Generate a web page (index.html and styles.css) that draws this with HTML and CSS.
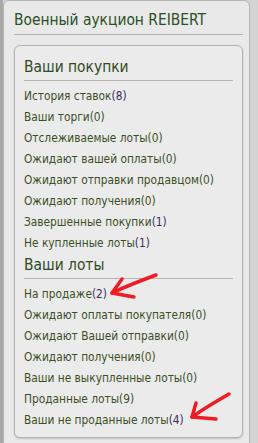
FILE: index.html
```html
<!DOCTYPE html>
<html lang="ru">
<head>
    <meta charset="UTF-8">
    <meta name="viewport" content="width=device-width, initial-scale=1.0">
    <title>Военный аукцион REIBERT</title>
    <link rel="stylesheet" href="styles.css">
</head>
<body>
    <div class="page">
        <div class="panel">
            <h2 class="panel-title">Военный аукцион REIBERT</h2>
            <div class="box">
                <h3>Ваши покупки</h3>
                <ul class="menu">
                    <li><a href="#">История ставок<span class="num">(8)</span></a></li>
                    <li><a href="#">Ваши торги(0)</a></li>
                    <li><a href="#">Отслеживаемые лоты(0)</a></li>
                    <li><a href="#">Ожидают вашей оплаты(0)</a></li>
                    <li><a href="#">Ожидают отправки продавцом(0)</a></li>
                    <li><a href="#">Ожидают получения(0)</a></li>
                    <li><a href="#">Завершенные покупки<span class="num">(1)</span></a></li>
                    <li><a href="#">Не купленные лоты<span class="num">(1)</span></a></li>
                </ul>
                <h3>Ваши лоты</h3>
                <ul class="menu">
                    <li><a href="#">На продаже<span class="num">(2)</span></a></li>
                    <li><a href="#">Ожидают оплаты покупателя(0)</a></li>
                    <li><a href="#">Ожидают Вашей отправки(0)</a></li>
                    <li><a href="#">Ожидают получения(0)</a></li>
                    <li><a href="#">Ваши не выкупленные лоты(0)</a></li>
                    <li><a href="#">Проданные лоты(9)</a></li>
                    <li><a href="#">Ваши не проданные лоты<span class="num">(4)</span></a></li>
                </ul>
            </div>
        </div>
    </div>

    <!-- red marker arrows drawn over the screenshot -->
    <svg class="marks" width="258" height="443" viewBox="0 0 258 443">
        <g fill="none" stroke="#ee1c24" stroke-width="3.5" stroke-linecap="round" stroke-linejoin="round">
            <path d="M156 275 C140 281 124 287 112 293"/>
            <path d="M122 279 L112 293 L134 297"/>
            <path d="M229 394 C215 402 202 410 192 417"/>
            <path d="M196 403 L192 417 L216 419"/>
        </g>
    </svg>
</body>
</html>
```

FILE: styles.css
```css
body {
    margin: 0;
    padding: 0;
    background-color: #d3d3d3;
    font-family: "DejaVu Sans Condensed", "DejaVu Sans", sans-serif;
}

.page {
    width: 258px;
    height: 443px;
    overflow: hidden;
    border-left: 3px solid #a9a9a9;
    box-sizing: border-box;
}

.panel {
    width: 247px;
    min-height: 460px;
    box-sizing: border-box;
    padding: 9px 6px 0 10px;
    background-color: #e9e9e9;
    border: 1px solid #b4b4b4;
    border-radius: 6px 6px 0 0;
}

.panel-title {
    margin: 0;
    padding: 0 0 4px 0;
    line-height: 20px;
    font-size: 15.4px;
    font-weight: normal;
    color: #2a4f22;
    border-bottom: 1px solid #b3b3b3;
}

.box {
    margin-top: 10px;
    padding: 11px 9px 6px 9px;
    border: 1px solid #a9bba6;
    border-radius: 6px;
    background-color: #ebebeb;
    box-shadow: 0 1px 2px rgba(0, 0, 0, 0.18);
}

.box h3 {
    margin: 0;
    padding: 0 0 3px 0;
    line-height: 20px;
    font-size: 15.4px;
    font-weight: normal;
    color: #2f4a22;
    border-bottom: 1px solid #b3b3b3;
}

.menu {
    list-style: none;
    margin: 5px 0 0 0;
    padding: 0;
}

.menu li {
    height: 21px;
    line-height: 21px;
    font-size: 11.8px;
}

.menu + h3 {
    margin-top: 1px;
}

.menu a {
    color: #3b4f1f;
    text-decoration: none;
}

.num {
    color: #3d2d5c;
}

.marks {
    position: absolute;
    left: 0;
    top: 0;
    pointer-events: none;
}
```
